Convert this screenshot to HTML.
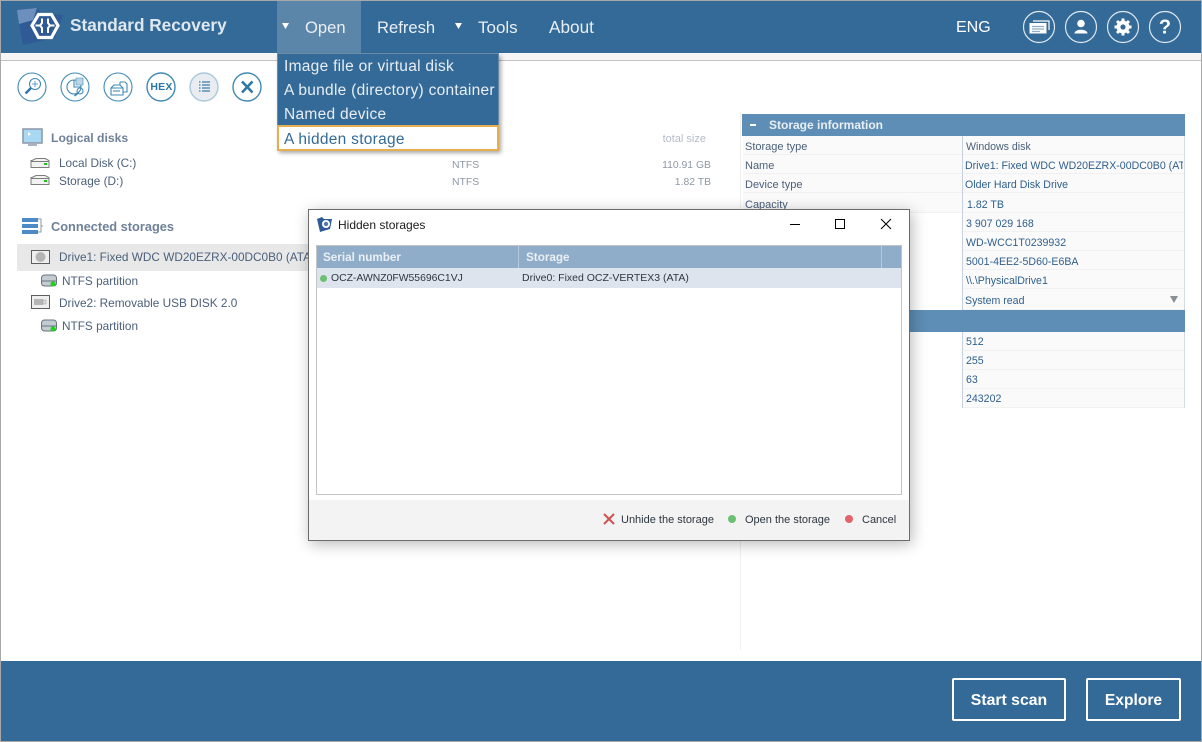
<!DOCTYPE html>
<html><head><meta charset="utf-8"><style>
html,body{margin:0;padding:0;background:#fff}
#p{position:relative;width:1202px;height:742px;overflow:hidden;background:#fff;font-family:"Liberation Sans",sans-serif;font-size:12px;color:#3d5670}
.t{position:absolute;white-space:nowrap;line-height:16px}
.b{position:absolute}
.m{font-size:16.6px;line-height:20px;position:absolute;white-space:nowrap;color:#e9eff5}
.mi{position:absolute;color:#e8eef4;font-size:15.5px;line-height:20px;white-space:nowrap;letter-spacing:.28px}
.h{position:absolute;font-weight:bold;font-size:12.8px;color:#6f8199;white-space:nowrap;line-height:16px}
.r{position:absolute;left:743px;width:219px;height:18px;background:#fafafa;border-bottom:1px solid #f1f1f1}
.v{position:absolute;left:963px;width:221px;height:18px;background:#fafafa;border-bottom:1px solid #f1f1f1}
.c{position:absolute;white-space:nowrap;font-size:11.8px;line-height:14px;color:#4b607a}
.l{position:absolute;white-space:nowrap;font-size:11px;line-height:14px;color:#4b607a}
.cv{position:absolute;white-space:nowrap;font-size:10.6px;line-height:14px;color:#2f5f8c}
.g{position:absolute;white-space:nowrap;line-height:14px;color:#8d97a6;font-size:10.4px}
svg{position:absolute;overflow:visible}
</style></head><body><div id="p">
<div class="b" style="left:0;top:0;width:1200px;height:740px;border:1px solid #a8a8a8;z-index:30"></div>
<div class="b" style="left:1px;top:1px;width:1200px;height:52px;background:#336a97"></div>
<div class="b" style="left:1px;top:53px;width:1200px;height:7px;background:#f5f5f5"></div>
<div class="b" style="left:1px;top:60px;width:1200px;height:1px;background:#c4c4c4"></div>
<div class="b" style="left:277px;top:1px;width:84px;height:52px;background:#5c86a9"></div>

<svg style="left:0;top:0" width="70" height="52">
<path d="M17 10L37 8L42 14L63 15L55 38L23 45Z" fill="#2f5a95"/>
<path d="M17 10L37 8L33 20L19 24Z" fill="#6d8fbe"/>
<path d="M38.500 14.500H51.500L58 25.500L51.500 37.500H38.500L32 25.500Z" fill="#2f5a95" stroke="#fff" stroke-width="3.200"/>
<path d="M42 18.500V23L40 25.500L42 28V33M48 18.500V23L50 25.500L48 28V33M35.500 25.500H40M50 25.500H54.500" stroke="#fff" stroke-width="2" fill="none"/>
</svg>
<div class="t" style="left:70px;top:14px;font-size:17.200px;line-height:22px;font-weight:bold;color:#dfe8f0">Standard Recovery</div>

<svg style="left:281px;top:22px" width="10" height="8"><path d="M1 1H8L4.500 7Z" fill="#fff"/></svg>
<div class="m" style="left:305px;top:18px">Open</div>
<div class="m" style="left:377px;top:18px">Refresh</div>
<svg style="left:454px;top:22px" width="10" height="8"><path d="M1 1H8L4.500 7Z" fill="#fff"/></svg>
<div class="m" style="left:478px;top:18px;font-size:17px">Tools</div>
<div class="m" style="left:549px;top:17px;font-size:17.200px">About</div>
<div class="m" style="left:956px;top:18px;color:#fff;font-size:16px">ENG</div>

<svg style="left:1022px;top:10px" width="170" height="36" fill="none" stroke="#dfe8f0" stroke-width="1.200">
<circle cx="17" cy="17" r="15.500"/><circle cx="59" cy="17" r="15.500"/><circle cx="101" cy="17" r="15.500"/><circle cx="143" cy="17" r="15.500"/>
<path d="M11 11H27V20" stroke="#fff"/>
<rect x="7.500" y="13" width="17" height="10.500" fill="#fff" stroke="none"/>
<path d="M10 16.500H22M10 19H22M10 21.500H18" stroke="#8fadc8"/>
<circle cx="59" cy="13.500" r="3.800" fill="#fff" stroke="none"/><path d="M52.500 23.500C52.500 18.500 65.500 18.500 65.500 23.500Z" fill="#fff" stroke="none"/>
<circle cx="101" cy="17" r="6.500" fill="#fff" stroke="none"/><circle cx="101" cy="17" r="2.600" fill="#336a97" stroke="none"/>
<path d="M101 8.500V12M101 22V25.500M92.500 17H96M106 17H109.500M95 11L97.500 13.500M104.500 20.500L107 23M107 11L104.500 13.500M97.500 20.500L95 23" stroke="#fff" stroke-width="3"/>
<text x="143" y="23.500" font-family="Liberation Sans" font-weight="bold" font-size="20" fill="#fff" stroke="none" text-anchor="middle">?</text>
</svg>

<svg style="left:17px;top:72px" width="250" height="30" fill="none" stroke="#3f8ab5" stroke-width="1.100">
<circle cx="15" cy="15" r="14"/><circle cx="58" cy="15" r="14"/><circle cx="101" cy="15" r="14"/>
<circle cx="144" cy="15" r="14" stroke-width="1.400"/><circle cx="187" cy="15" r="14" fill="#e9edf1" stroke="#a9c8da" stroke-width="1.400"/><circle cx="230" cy="15" r="14" stroke-width="1.400"/>
<circle cx="18" cy="12" r="5.500"/><path d="M14 16L8.500 21.500" stroke-width="2.400" stroke="#2f77a8"/><path d="M18 9V15M15 12H21" stroke-width=".8"/>
<circle cx="57" cy="15" r="7"/><path d="M57 8V15H64"/><path d="M59 6H66V13H59Z" fill="#bcd6e6" stroke="#3f8ab5" stroke-width=".6"/><circle cx="63" cy="19" r="3"/><path d="M61 21L57.500 24" stroke-width="1.800"/>
<path d="M94 16H106V23H94Z M94 16L97 13H103L106 16"/><path d="M103 10H108L110 12V20H106M103 10V13"/><path d="M96 19H103"/>
<path d="M182 10H183.500M185 10H193M182 13H183.500M185 13H193M182 16H183.500M185 16H193M182 19H183.500M185 19H193" stroke="#6f9dbd" stroke-width="1.700"/>
<path d="M225 9.500L235.500 20.500M235.500 9.500L225 20.500" stroke="#2f77a8" stroke-width="2.600"/>
</svg>
<div class="t" style="left:147px;top:79px;width:29px;text-align:center;font-weight:bold;font-size:10.500px;color:#2b76a7;letter-spacing:.2px">HEX</div>

<svg style="left:22px;top:128px" width="22" height="20"><rect x="1" y="1" width="19" height="14" fill="#a9d8f2" stroke="#8a97a8" stroke-width="1.500"/><path d="M6 16H15V18H6Z" fill="#aab3bf"/><path d="M6 4L9 6L6 8Z" fill="#fff"/></svg>
<div class="h" style="left:51px;top:130px;font-size:12.200px">Logical disks</div>
<svg style="left:30px;top:157px" width="22" height="12"><path d="M2 3.500L6 1.500H15L19 3.500V10.500H1V3.500Z" fill="#f2f2f2" stroke="#7c7c7c"/><path d="M1 4.500H19" stroke="#7c7c7c"/><rect x="14" y="6" width="3" height="2" fill="#19c119"/></svg>
<svg style="left:30px;top:174px" width="22" height="12"><path d="M2 3.500L6 1.500H15L19 3.500V10.500H1V3.500Z" fill="#f2f2f2" stroke="#7c7c7c"/><path d="M1 4.500H19" stroke="#7c7c7c"/><rect x="14" y="6" width="3" height="2" fill="#19c119"/></svg>
<div class="c" style="left:59px;top:156px">Local Disk (C:)</div>
<div class="c" style="left:59px;top:174px">Storage (D:)</div>
<div class="g" style="left:452px;top:159px">NTFS</div>
<div class="g" style="left:452px;top:176px">NTFS</div>
<div class="g" style="right:496px;top:132px;color:#b5bcc8;font-size:11px">total size</div>
<div class="g" style="right:491px;top:159px">110.91 GB</div>
<div class="g" style="right:491px;top:176px">1.82 TB</div>

<svg style="left:22px;top:217px" width="22" height="18"><rect x="0" y="1" width="16" height="4" fill="#4c8bc6"/><rect x="0" y="7" width="16" height="4" fill="#4c8bc6"/><rect x="0" y="13" width="16" height="4" fill="#4c8bc6"/><path d="M16 2H19V15H16M19 9H21" stroke="#8c98a8" fill="none"/></svg>
<div class="h" style="left:51px;top:219px">Connected storages</div>

<div class="b" style="left:17px;top:244px;width:300px;height:27px;background:#e8e8e8"></div>
<svg style="left:31px;top:250px" width="20" height="15"><rect x=".5" y=".5" width="18" height="13" fill="#efefef" stroke="#5e5e5e"/><circle cx="9.500" cy="7" r="5" fill="#b5b5b5"/></svg>
<div class="c" style="left:59px;top:250px">Drive1: Fixed WDC WD20EZRX-00DC0B0 (ATA)</div>
<svg style="left:41px;top:274px" width="17" height="14"><rect x=".5" y="1" width="15" height="11" rx="3" fill="#c4ccd2" stroke="#67737d"/><path d="M1 7H15" stroke="#67737d"/><circle cx="12" cy="10" r="2.500" fill="#1ed21e"/></svg>
<div class="c" style="left:62px;top:274px">NTFS partition</div>
<svg style="left:31px;top:295px" width="20" height="15"><rect x=".5" y=".5" width="18" height="13" fill="#efefef" stroke="#5e5e5e"/><rect x="3" y="4" width="9" height="6" fill="#b5b5b5"/><rect x="12" y="5" width="3" height="4" fill="#ddd" stroke="#999" stroke-width=".5"/></svg>
<div class="c" style="left:59px;top:296px">Drive2: Removable USB DISK 2.0</div>
<svg style="left:41px;top:319px" width="17" height="14"><rect x=".5" y="1" width="15" height="11" rx="3" fill="#c4ccd2" stroke="#67737d"/><path d="M1 7H15" stroke="#67737d"/><circle cx="12" cy="10" r="2.500" fill="#1ed21e"/></svg>
<div class="c" style="left:62px;top:319px">NTFS partition</div>

<div class="b" style="left:740px;top:113px;width:1px;height:537px;background:#efefef"></div>
<div class="r" style="top:136px"></div><div class="v" style="top:136px"></div>
<div class="r" style="top:155px"></div><div class="v" style="top:155px"></div>
<div class="r" style="top:174px"></div><div class="v" style="top:174px"></div>
<div class="r" style="top:193px;height:19px"></div><div class="v" style="top:193px;height:19px"></div>
<div class="v" style="top:213px"></div><div class="v" style="top:232px"></div><div class="v" style="top:251px"></div><div class="v" style="top:270px"></div><div class="v" style="top:289px;height:20px"></div>
<div class="v" style="top:332px"></div><div class="v" style="top:351px"></div><div class="v" style="top:370px"></div><div class="v" style="top:389px"></div>
<div class="b" style="left:742px;top:114px;width:443px;height:22px;background:#5e8db5"></div>
<div class="b" style="left:750px;top:124px;width:6px;height:2px;background:#fff"></div>
<div class="t" style="left:769px;top:117px;font-weight:bold;font-size:12px;color:#e8eff5">Storage information</div>
<div class="b" style="left:742px;top:310px;width:443px;height:22px;background:#5e8db5"></div>
<div class="b" style="left:962px;top:136px;width:1px;height:174px;background:#c6d0de"></div>
<div class="b" style="left:962px;top:332px;width:1px;height:76px;background:#c6d0de"></div>
<div class="b" style="left:1184px;top:136px;width:1px;height:174px;background:#d3dae4"></div>
<div class="b" style="left:1184px;top:332px;width:1px;height:76px;background:#d3dae4"></div>
<div class="l" style="left:745px;top:140px">Storage type</div>
<div class="l" style="left:745px;top:159px">Name</div>
<div class="l" style="left:745px;top:178px">Device type</div>
<div class="l" style="left:745px;top:198px">Capacity</div>
<div class="cv" style="left:966px;top:140px;color:#4b607a">Windows disk</div>
<div class="b" style="left:965px;top:159px;width:218px;height:14px;overflow:hidden"><div class="cv" style="left:0;top:0">Drive1: Fixed WDC WD20EZRX-00DC0B0 (ATA)</div></div>
<div class="cv" style="left:965px;top:178px">Older Hard Disk Drive</div>
<div class="cv" style="left:967px;top:198px">1.82 TB</div>
<div class="cv" style="left:966px;top:217px">3 907 029 168</div>
<div class="cv" style="left:966px;top:236px">WD-WCC1T0239932</div>
<div class="cv" style="left:966px;top:255px">5001-4EE2-5D60-E6BA</div>
<div class="cv" style="left:966px;top:274px">\\.\PhysicalDrive1</div>
<div class="cv" style="left:965px;top:294px">System read</div>
<svg style="left:1170px;top:296px" width="9" height="8"><path d="M0 0H8L4 7Z" fill="#8a8f96"/></svg>
<div class="cv" style="left:966px;top:335px">512</div>
<div class="cv" style="left:966px;top:354px">255</div>
<div class="cv" style="left:966px;top:373px">63</div>
<div class="cv" style="left:966px;top:392px">243202</div>

<div class="b" style="left:277px;top:53px;width:222px;height:97px;background:#336a97;border:1px solid #6b8aa8;border-bottom:0;box-sizing:border-box;box-shadow:2px 3px 4px rgba(0,0,0,.35)"></div>
<div class="mi" style="left:284px;top:57px">Image file or virtual disk</div>
<div class="mi" style="left:284px;top:81px">A bundle (directory) container</div>
<div class="mi" style="left:284px;top:105px">Named device</div>
<div class="b" style="left:277px;top:125px;width:222px;height:26px;background:#fff;border:2px solid #e6ae4f;box-sizing:border-box"></div>
<div class="mi" style="left:284px;top:130px;color:#336a97">A hidden storage</div>

<div class="b" style="left:308px;top:209px;width:602px;height:332px;background:#fff;border:1px solid #6c6c6c;box-sizing:border-box;box-shadow:2px 3px 14px rgba(0,0,0,.28)"></div>
<svg style="left:317px;top:217px" width="16" height="15"><path d="M0 2L5 0L7 2H15L13 12L3 15Z" fill="#2f5a95"/><circle cx="9" cy="7" r="4" fill="#fff"/><circle cx="9" cy="7" r="2.200" fill="#5679a8"/></svg>
<div class="t" style="left:338px;top:217px;font-size:12px;color:#1a1a1a">Hidden storages</div>
<svg style="left:785px;top:215px" width="110" height="20" fill="none" stroke="#000" stroke-width="1"><path d="M5 9.500H15"/><rect x="50.500" y="4.500" width="9" height="9"/><path d="M96 4L106 14M106 4L96 14"/></svg>

<div class="b" style="left:316px;top:245px;width:586px;height:250px;border:1px solid #c4c4c4;box-sizing:border-box;background:#fff"></div>
<div class="b" style="left:317px;top:246px;width:584px;height:22px;background:#8fadc8"></div>
<div class="b" style="left:518px;top:246px;width:1px;height:22px;background:#b5cadc"></div>
<div class="b" style="left:881px;top:246px;width:1px;height:22px;background:#b5cadc"></div>
<div class="b" style="left:317px;top:268px;width:584px;height:20px;background:#dee4ee"></div>
<div class="t" style="left:323px;top:250px;font-weight:bold;font-size:11.700px;color:#e9eff5">Serial number</div>
<div class="t" style="left:526px;top:250px;font-weight:bold;font-size:11.700px;color:#e9eff5">Storage</div>
<div class="b" style="left:320px;top:275px;width:7px;height:7px;border-radius:50%;background:#6cc072"></div>
<div class="t" style="left:331px;top:271px;font-size:10.400px;color:#2c3640">OCZ-AWNZ0FW55696C1VJ</div>
<div class="t" style="left:522px;top:270px;font-size:10.500px;color:#2c3640">Drive0: Fixed OCZ-VERTEX3 (ATA)</div>

<div class="b" style="left:309px;top:500px;width:600px;height:40px;background:#f3f3f3"></div>
<svg style="left:603px;top:513px" width="12" height="12"><path d="M1 1L11 11M11 1L1 11" stroke="#cf5252" stroke-width="2"/></svg>
<div class="t" style="left:621px;top:512px;font-size:11px;color:#2c3640">Unhide the storage</div>
<div class="b" style="left:728px;top:515px;width:8px;height:8px;border-radius:50%;background:#6cc072"></div>
<div class="t" style="left:745px;top:512px;font-size:11px;color:#2c3640">Open the storage</div>
<div class="b" style="left:845px;top:515px;width:8px;height:8px;border-radius:50%;background:#e2646a"></div>
<div class="t" style="left:862px;top:512px;font-size:11px;color:#2c3640">Cancel</div>

<div class="b" style="left:1px;top:661px;width:1200px;height:80px;background:#336a97"></div>
<div class="b" style="left:952px;top:678px;width:114px;height:43px;border:2px solid #fff;border-radius:2px;box-sizing:border-box;color:#fff;font-weight:bold;font-size:15.800px;line-height:41px;text-align:center">Start scan</div>
<div class="b" style="left:1086px;top:678px;width:95px;height:43px;border:2px solid #fff;border-radius:2px;box-sizing:border-box;color:#fff;font-weight:bold;font-size:15.600px;line-height:41px;text-align:center">Explore</div>
</div></body></html>
